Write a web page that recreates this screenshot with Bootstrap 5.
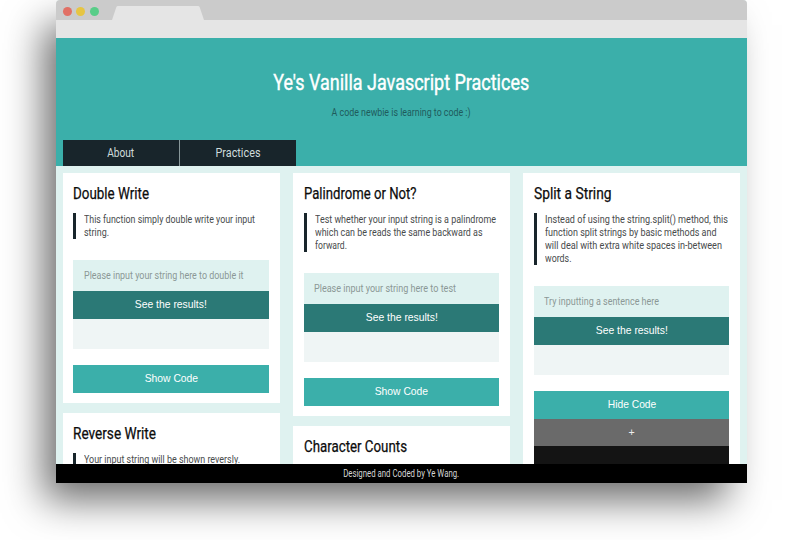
<!DOCTYPE html>
<html lang="en">
<head>
<meta charset="utf-8">
<title>Ye's Vanilla Javascript Practices</title>
<link rel="stylesheet" href="https://cdn.jsdelivr.net/npm/bootstrap@5.3.0/dist/css/bootstrap.min.css">
<style>
body{background:#fff;width:800px;height:540px;overflow:hidden;font-family:Roboto,"Liberation Sans",sans-serif;font-size:10.9px;line-height:13px;color:#484b4c}
.browser{width:691px;height:483px;margin-left:56px;border-radius:4px 4px 0 0;box-shadow:-16px 21px 37px -4px rgba(0,0,0,.58)}
.screen{border-radius:4px 4px 0 0;background:#dff2f0}
.tabs-bar{height:20px;background:#cbcbcb;padding-left:7px}
.dot{width:9px;height:9px;margin-right:4.3px;margin-top:2px}
.dot-red{background:#e17065}
.dot-yellow{background:#e6c543}
.dot-green{background:#58cd88}
.tab-shape{margin-left:9px;display:block}
.address{height:18px;background:#e5e5e5}
.hero{height:128px;background:#3bafaa}
.hero h1{font-size:21.5px;font-weight:400;line-height:26px;color:#fff;padding-top:32px;-webkit-text-stroke:.4px #fff}
.hero p{color:#1f5b5c;padding-top:10px;font-size:10.7px}
.menu{height:26px;padding-left:7px}
.menu a{width:116px;background:#18252b;color:#cfdcdc;font-size:12.5px;line-height:26px}
.menu a+a{width:117px;border-left:1px solid #88989a}
.content-area{padding:7px 7px 0;gap:13.7px}
.col-w{width:216.5px;gap:10px}
.panel{background:#fff;padding:11px 10.4px 10.5px 10.4px}
.panel h2{font-size:16.5px;font-weight:400;line-height:20px;color:#0c0c0c;margin:0 0 9px;-webkit-text-stroke:.25px #0c0c0c}
.desc{border-left:3.5px solid #18252b;padding-left:8px;margin-bottom:21px}
.field{height:31px;line-height:31px;padding-left:10.5px;background:#dff2f0;color:#8b9896}
.act{height:27.5px;line-height:27.5px;font-family:"Liberation Sans",Arial,sans-serif;font-size:10.6px;color:#fff;background:#3bafaa}
.act.run{background:#2b7976}
.result{height:30px;margin:.5px 0 16px;background:#eff5f5}
.act.plus{background:#6a6a6a;color:#eee}
.code-box{height:60px;background:#141414}
.foot{height:19px;line-height:19px;background:#000;color:#d6d6d6;font-size:10.4px}
.fit{display:inline-block;white-space:nowrap}
.ln{display:block;width:max-content;white-space:nowrap;transform-origin:0 50%}
</style>
<script src="https://cdn.jsdelivr.net/npm/bootstrap@5.3.0/dist/js/bootstrap.bundle.min.js"></script>
</head>
<body>
<div class="browser">
<div class="screen d-flex flex-column h-100 overflow-hidden">
  <div class="tabs-bar d-flex align-items-center flex-shrink-0">
    <span class="dot dot-red rounded-circle"></span>
    <span class="dot dot-yellow rounded-circle"></span>
    <span class="dot dot-green rounded-circle"></span>
    <svg class="tab-shape align-self-end" width="92" height="14" viewBox="0 0 92 14"><path d="M0 14L4.3 1.2Q4.7 0 6 0H86Q87.300 0 87.700 1.200L92 14Z" fill="#e5e5e5"/></svg>
  </div>
  <div class="address flex-shrink-0"></div>
  <header class="hero d-flex flex-column text-center flex-shrink-0">
    <h1 class="m-0"><span class="fit" data-w="256">Ye's Vanilla Javascript Practices</span></h1>
    <p class="m-0"><span class="fit" data-w="139">A code newbie is learning to code :)</span></p>
    <nav class="menu d-flex mt-auto">
      <a class="text-decoration-none"><span class="fit" data-w="27">About</span></a>
      <a class="text-decoration-none"><span class="fit" data-w="45">Practices</span></a>
    </nav>
  </header>
  <main class="content-area d-flex align-items-start flex-grow-1 overflow-hidden">
    <div class="col-w d-flex flex-column flex-shrink-0">
      <section class="panel">
        <h2><span class="ln" data-w="76">Double Write</span></h2>
        <div class="desc"><span class="ln" data-w="171">This function simply double write your input</span><span class="ln" data-w="25">string.</span></div>
        <div class="field"><span class="ln" data-w="159.5">Please input your string here to double it</span></div>
        <div class="act run text-center"><span class="fit" data-w="72">See the results!</span></div>
        <div class="result"></div>
        <div class="act text-center"><span class="fit" data-w="53.5">Show Code</span></div>
      </section>
      <section class="panel">
        <h2><span class="ln" data-w="83">Reverse Write</span></h2>
        <div class="desc"><span class="ln" data-w="156">Your input string will be shown reversly.</span></div>
      </section>
    </div>
    <div class="col-w d-flex flex-column flex-shrink-0">
      <section class="panel">
        <h2><span class="ln" data-w="112.5">Palindrome or Not?</span></h2>
        <div class="desc"><span class="ln" data-w="181">Test whether your input string is a palindrome</span><span class="ln" data-w="167.5">which can be reads the same backward as</span><span class="ln" data-w="32">forward.</span></div>
        <div class="field"><span class="ln" data-w="142">Please input your string here to test</span></div>
        <div class="act run text-center"><span class="fit" data-w="72">See the results!</span></div>
        <div class="result"></div>
        <div class="act text-center"><span class="fit" data-w="53.5">Show Code</span></div>
      </section>
      <section class="panel">
        <h2><span class="ln" data-w="103">Character Counts</span></h2>
      </section>
    </div>
    <div class="col-w d-flex flex-column flex-shrink-0">
      <section class="panel">
        <h2><span class="ln" data-w="77.5">Split a String</span></h2>
        <div class="desc"><span class="ln" data-w="183">Instead of using the string.split() method, this</span><span class="ln" data-w="171.5">function split strings by basic methods and</span><span class="ln" data-w="177">will deal with extra white spaces in-between</span><span class="ln" data-w="26.5">words.</span></div>
        <div class="field"><span class="ln" data-w="115">Try inputting a sentence here</span></div>
        <div class="act run text-center"><span class="fit" data-w="72">See the results!</span></div>
        <div class="result"></div>
        <div class="act text-center"><span class="fit" data-w="48.5">Hide Code</span></div>
        <div class="act plus text-center">+</div>
        <div class="code-box"></div>
      </section>
    </div>
  </main>
  <footer class="foot text-center flex-shrink-0"><span class="fit" data-w="116">Designed and Coded by Ye Wang.</span></footer>
</div>
</div>
<script>
// Condense each line of text to its set width
document.querySelectorAll('[data-w]').forEach(function (el) {
  el.style.transform = 'scaleX(' + (el.dataset.w / el.getBoundingClientRect().width) + ')';
});
</script>
</body>
</html>
